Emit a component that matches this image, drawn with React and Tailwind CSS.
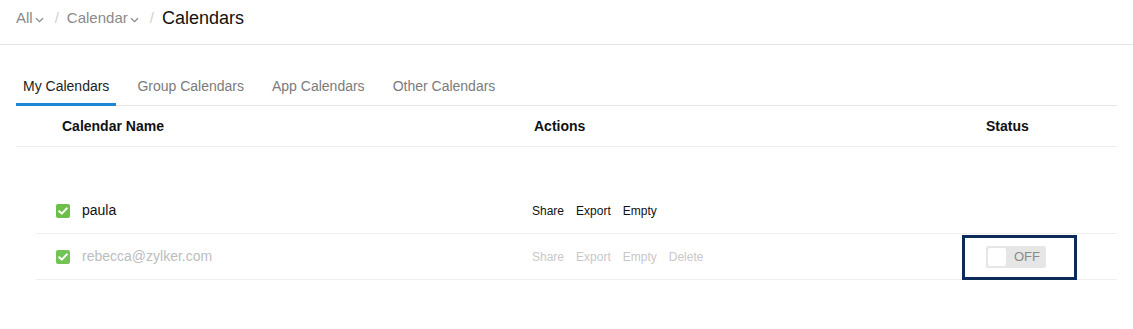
import React from "react";

const Chevron = () => (
  <svg width="9" height="6" viewBox="0 0 9 6" className="ml-[2px] mt-[4px]">
    <path d="M1 1.2 L4.5 4.6 L8 1.2" fill="none" stroke="#888" strokeWidth="1.2" />
  </svg>
);

const Check = ({ faded }) => (
  <span className={`flex h-[14px] w-[14px] items-center justify-center rounded-[2px] ${faded ? "bg-[#72c456]" : "bg-[#6cc04a]"}`}>
    <svg width="10" height="8" viewBox="0 0 10 8">
      <path d="M1.2 4.2 L3.8 6.6 L8.8 1.4" fill="none" stroke="#fff" strokeWidth="2" strokeLinecap="round" strokeLinejoin="round" />
    </svg>
  </span>
);

export default function App() {
  const tabs = ["My Calendars", "Group Calendars", "App Calendars", "Other Calendars"];
  return (
    <div className="min-h-[329px] w-[1133px] bg-white font-['Liberation_Sans',Arial,sans-serif]">
      <div className="flex h-[45px] items-center border-b border-[#e5e5e5] pl-4 pb-[8px]">
        <span className="flex items-center text-[15px] text-[#8a8a8a]">All<Chevron /></span>
        <span className="ml-[11px] text-[15px] text-[#cfcfcf]">/</span>
        <span className="ml-[8px] flex items-center text-[15px] text-[#8a8a8a]">Calendar<Chevron /></span>
        <span className="ml-[11px] text-[15px] text-[#cfcfcf]">/</span>
        <span className="ml-[8px] text-[18px] text-[#111]">Calendars</span>
      </div>

      <div className="mx-4 mt-[31px]">
        <div className="flex gap-[14px] border-b border-[#e6e6e6]">
          {tabs.map((t, i) => (
            <div
              key={t}
              className={`border-b-[3px] px-[7px] pb-[7px] text-[14px] leading-[20px] mb-[-1px] ${
                i === 0 ? "border-[#1f86d6] text-[#222]" : "border-transparent text-[#7b7b7b]"
              }`}
            >
              {t}
            </div>
          ))}
        </div>

        <div className="grid h-[41px] grid-cols-[518px_452px_1fr] items-center border-b border-[#ececec] text-[14px] font-bold text-[#111]">
          <div className="pl-[46px]">Calendar Name</div>
          <div>Actions</div>
          <div>Status</div>
        </div>

        <div className="ml-5 mt-[41px]">
          <div className="grid h-[46px] grid-cols-[496px_454px_1fr] items-center border-b border-[#efefef]">
            <div className="flex items-center gap-3 pl-5">
              <Check />
              <span className="text-[14px] text-[#111]">paula</span>
            </div>
            <div className="flex gap-3 text-[12px] text-[#111]">
              <span>Share</span>
              <span>Export</span>
              <span>Empty</span>
            </div>
            <div />
          </div>

          <div className="grid h-[46px] grid-cols-[496px_454px_1fr] items-center border-b border-[#efefef]">
            <div className="flex items-center gap-3 pl-5">
              <Check faded />
              <span className="text-[14px] text-[#bdbdbd]">rebecca@zylker.com</span>
            </div>
            <div className="flex gap-3 text-[12px] text-[#c8c8c8]">
              <span>Share</span>
              <span>Export</span>
              <span>Empty</span>
              <span>Delete</span>
            </div>
            <div className="relative">
              <div className="flex h-[22px] w-[60px] items-center rounded-[2px] bg-[#e6e6e6] pl-[2px]">
                <span className="h-[18px] w-[18px] rounded-[2px] bg-white" />
                <span className="ml-[8px] text-[13px] text-[#8a8a8a]">OFF</span>
              </div>
              <div className="pointer-events-none absolute left-[-24px] top-[-11px] h-[45px] w-[115px] border-[3px] border-[#0c2b58]" />
            </div>
          </div>
        </div>
      </div>
    </div>
  );
}
